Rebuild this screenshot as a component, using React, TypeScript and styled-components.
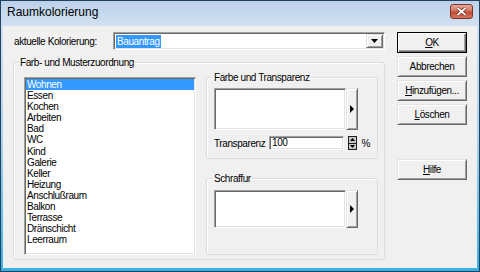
import styled, { createGlobalStyle } from 'styled-components';

const UI_FONT = `"Liberation Sans", Arial, sans-serif`;

const GlobalStyle = createGlobalStyle`
  html, body {
    margin: 0;
    padding: 0;
    background: #f0f0f0;
  }
  body {
    font-family: ${UI_FONT};
    font-size: 10px;
    letter-spacing: -0.4px;
    color: #000;
  }
`;

const rooms = [
  'Wohnen',
  'Essen',
  'Kochen',
  'Arbeiten',
  'Bad',
  'WC',
  'Kind',
  'Galerie',
  'Keller',
  'Heizung',
  'Anschlußraum',
  'Balkon',
  'Terrasse',
  'Dränschicht',
  'Leerraum',
];

const DownArrow = () => (
  <svg width="7" height="4" viewBox="0 0 7 4">
    <polygon points="0,0 7,0 3.5,4" fill="#000" />
  </svg>
);

const RightArrow = () => (
  <svg width="4" height="8" viewBox="0 0 4 8">
    <polygon points="0,0 4,4 0,8" fill="#000" />
  </svg>
);

const App = () => {
  return (
    <>
      <GlobalStyle />
      <Window>
        <TitleBar>
          <Title>Raumkolorierung</Title>
          <CloseButton>
            <svg width="11" height="9" viewBox="0 0 11 9">
              <path d="M1.5 1 L9.5 8 M9.5 1 L1.5 8" stroke="#6b1f14" strokeWidth="3.2" />
              <path d="M1.5 1 L9.5 8 M9.5 1 L1.5 8" stroke="#fff" strokeWidth="1.8" />
            </svg>
          </CloseButton>
        </TitleBar>
        <Client>
          <LeftCol>
            <TopRow>
              <FieldLabel>aktuelle Kolorierung:</FieldLabel>
              <Combo>
                <Selection>Bauantrag</Selection>
                <ComboButton>
                  <DownArrow />
                </ComboButton>
              </Combo>
            </TopRow>
            <MainGroup>
              <Legend>Farb- und Musterzuordnung</Legend>
              <MainBody>
                <ListBox>
                  {rooms.map((r, i) => (
                    <ListRow key={r} $selected={i === 0}>
                      {r}
                    </ListRow>
                  ))}
                </ListBox>
                <SideCol>
                  <GroupBox>
                    <Legend $inset>Farbe und Transparenz</Legend>
                    <InnerBody $padTop={4} $padBottom={8}>
                      <PreviewRow>
                        <Preview $h={42} />
                        <ArrowButton $h={42}>
                          <RightArrow />
                        </ArrowButton>
                      </PreviewRow>
                      <TransRow>
                        <TransLabel>Transparenz</TransLabel>
                        <TextField>100</TextField>
                        <Spinner>
                          <SpinHalf>
                            <svg width="5" height="3" viewBox="0 0 5 3">
                              <polygon points="0,3 5,3 2.5,0" fill="#000" />
                            </svg>
                          </SpinHalf>
                          <SpinHalf>
                            <svg width="5" height="3" viewBox="0 0 5 3">
                              <polygon points="0,0 5,0 2.5,3" fill="#000" />
                            </svg>
                          </SpinHalf>
                        </Spinner>
                        <Percent>%</Percent>
                      </TransRow>
                    </InnerBody>
                  </GroupBox>
                  <HatchGroup>
                    <Legend $inset>Schraffur</Legend>
                    <InnerBody $padTop={5} $padBottom={26}>
                      <PreviewRow>
                        <Preview $h={38} />
                        <ArrowButton $h={38}>
                          <RightArrow />
                        </ArrowButton>
                      </PreviewRow>
                    </InnerBody>
                  </HatchGroup>
                </SideCol>
              </MainBody>
            </MainGroup>
          </LeftCol>
          <ButtonCol>
            <Button $default>
              <u>O</u>K
            </Button>
            <Button>Abbrechen</Button>
            <Button>
              <u>H</u>inzufügen...
            </Button>
            <Button>
              <u>L</u>öschen
            </Button>
            <Button $gapTop>
              <u>H</u>ilfe
            </Button>
          </ButtonCol>
        </Client>
      </Window>
    </>
  );
};

export default App;

const sunken = `
  border: 1px solid;
  border-color: #a0a0a0 #fff #fff #a0a0a0;
  box-shadow: inset 1px 1px 0 #696969, inset -1px -1px 0 #e3e3e3;
`;

const raised = `
  border: 1px solid;
  border-color: #e3e3e3 #696969 #696969 #e3e3e3;
  box-shadow: inset 1px 1px 0 #fff, inset -1px -1px 0 #a0a0a0;
`;

const Window = styled.div`
  width: 480px;
  height: 272px;
  box-sizing: border-box;
  border: 1px solid #23425d;
  padding: 0 2px 3px;
  display: flex;
  flex-direction: column;
  background: linear-gradient(
    180deg,
    #bcd2ea 0px,
    #d2e1f2 26px,
    #a9d2ee 140px,
    #36b1e5 100%
  );
`;

const TitleBar = styled.div`
  height: 25px;
  display: flex;
  align-items: flex-start;
  justify-content: space-between;
  padding: 3px 4px 0 4px;
  box-sizing: border-box;
`;

const Title = styled.span`
  font-size: 12px;
  letter-spacing: 0;
  line-height: 15px;
  margin-top: 1px;
  color: #000;
`;

const CloseButton = styled.div`
  width: 23px;
  height: 15px;
  box-sizing: border-box;
  border: 1px solid #7c3428;
  border-radius: 3px;
  background: linear-gradient(180deg, #e9a99c 0%, #d37563 45%, #c44b35 55%, #d2765e 100%);
  display: flex;
  align-items: center;
  justify-content: center;
`;

const Client = styled.div`
  flex: 1;
  background: #f0f0f0;
  display: flex;
  padding: 6px 0 0 10px;
`;

const LeftCol = styled.div`
  width: 372px;
  display: flex;
  flex-direction: column;
`;

const TopRow = styled.div`
  height: 18px;
  display: flex;
  align-items: center;
`;

const FieldLabel = styled.span`
  width: 100px;
  padding-left: 1px;
  box-sizing: border-box;
  white-space: nowrap;
`;

const Combo = styled.div`
  width: 272px;
  height: 18px;
  box-sizing: border-box;
  background: #fff;
  display: flex;
  align-items: center;
  padding: 1px 1px 1px 2px;
  ${sunken}
`;

const Selection = styled.span`
  background: #3399ff;
  color: #fff;
  line-height: 13px;
  padding: 0 1px;
`;

const ComboButton = styled.div`
  margin-left: auto;
  width: 17px;
  height: 14px;
  box-sizing: border-box;
  background: #f0f0f0;
  display: flex;
  align-items: center;
  justify-content: center;
  ${raised}
`;

const GroupBox = styled.fieldset`
  margin: 0;
  padding: 0;
  min-width: 0;
  border: 1px solid #d5dfe5;
  border-radius: 3px;
  box-shadow: inset 1px 1px 0 #fff;
`;

const MainGroup = styled(GroupBox)`
  margin-top: 6px;
`;

const HatchGroup = styled(GroupBox)`
  margin-top: 13px;
`;

const Legend = styled.legend<{ $inset?: boolean }>`
  margin-left: ${(p) => (p.$inset ? 6 : 5)}px;
  padding: 0 1px;
  line-height: 13px;
`;

const MainBody = styled.div`
  display: flex;
  padding: 2px 4px 4px 10px;
`;

const ListBox = styled.div`
  width: 172px;
  height: 178px;
  margin-top: 6px;
  box-sizing: border-box;
  background: #fff;
  padding: 1px;
  ${sunken}
`;

const ListRow = styled.div<{ $selected?: boolean }>`
  height: 11.1px;
  line-height: 11px;
  padding-left: 1px;
  white-space: nowrap;
  background: ${(p) => (p.$selected ? '#3399ff' : 'transparent')};
  color: ${(p) => (p.$selected ? '#fff' : '#000')};
`;

const SideCol = styled.div`
  width: 172px;
  margin-left: 10px;
  display: flex;
  flex-direction: column;
`;

const InnerBody = styled.div<{ $padTop: number; $padBottom: number }>`
  padding: ${(p) => p.$padTop}px 7px ${(p) => p.$padBottom}px 7px;
`;

const PreviewRow = styled.div`
  display: flex;
`;

const Preview = styled.div<{ $h: number }>`
  width: 132px;
  height: ${(p) => p.$h}px;
  box-sizing: border-box;
  background: #fff;
  ${sunken}
`;

const ArrowButton = styled.div<{ $h: number }>`
  width: 12px;
  height: ${(p) => p.$h}px;
  box-sizing: border-box;
  background: #f0f0f0;
  display: flex;
  align-items: center;
  justify-content: center;
  ${raised}
`;

const TransRow = styled.div`
  margin-top: 6px;
  height: 14px;
  display: flex;
  align-items: center;
`;

const TransLabel = styled.span`
  width: 56px;
  white-space: nowrap;
`;

const TextField = styled.div`
  width: 76px;
  height: 14px;
  box-sizing: border-box;
  background: #fff;
  line-height: 12px;
  padding-left: 2px;
  ${sunken}
`;

const Spinner = styled.div`
  margin-left: 4px;
  width: 9px;
  height: 14px;
  box-sizing: border-box;
  background: #1e1e1e;
  padding: 1px;
  display: flex;
  flex-direction: column;
  gap: 1px;
`;

const SpinHalf = styled.div`
  flex: 1;
  background: #c8c8c8;
  display: flex;
  align-items: center;
  justify-content: center;
`;

const Percent = styled.span`
  margin-left: 5px;
`;

const ButtonCol = styled.div`
  margin-left: 12px;
  width: 70px;
  display: flex;
  flex-direction: column;
  gap: 3px;
`;

const Button = styled.div<{ $default?: boolean; $gapTop?: boolean }>`
  width: 70px;
  height: 21px;
  box-sizing: border-box;
  background: #f0f0f0;
  display: flex;
  align-items: center;
  justify-content: center;
  margin-top: ${(p) => (p.$gapTop ? 31 : 0)}px;
  ${raised}
  ${(p) =>
    p.$default &&
    `
    border: 1px solid #000;
    box-shadow: inset 1px 1px 0 #fff, inset -1px -1px 0 #696969,
      inset -2px -2px 0 #a0a0a0;
  `}
  u {
    text-decoration-thickness: 1px;
    text-underline-offset: 1px;
  }
`;
